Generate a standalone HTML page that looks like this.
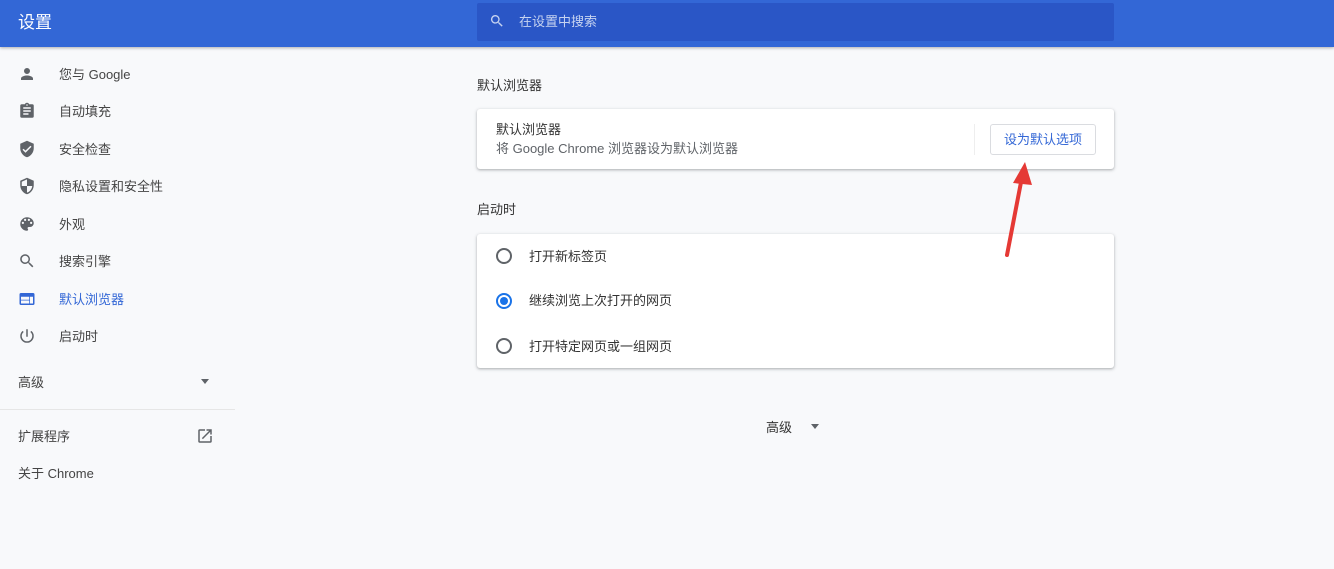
<!DOCTYPE html>
<html><head><meta charset="utf-8"><style>
*{margin:0;padding:0;box-sizing:border-box}
body{width:1334px;height:569px;overflow:hidden;background:#f8f9fb;font-family:"Liberation Sans","Noto Sans CJK SC",sans-serif;font-size:13px;line-height:15px;color:#202124;position:relative}
.hdr{position:absolute;left:0;top:0;width:1334px;height:47px;background:#3367d6;box-shadow:0 1px 3px rgba(0,0,0,.3)}
.hdr .t{position:absolute;left:18px;top:13px;color:#fff;font-size:17px;line-height:20px}
.search{position:absolute;left:477px;top:3px;width:637px;height:38px;background:#2a56c6;border-radius:2px}
.search span{position:absolute;left:42px;top:11px;color:#c6d3f0;font-size:13px}
.item{position:absolute;left:0;height:37px;width:235px;color:#444}
.item svg{position:absolute;left:18px;top:9px}
.item span{position:absolute;left:59px;top:11px}
.sel{color:#3367d6}
.sep{position:absolute;left:0;top:409px;width:235px;border-top:1px solid #e6e6e6}
.sec{position:absolute;left:477px;font-size:13px;color:#333}
.card{position:absolute;left:477px;width:637px;background:#fff;border-radius:3px;box-shadow:0 1px 2px rgba(60,64,67,.3),0 1px 3px 1px rgba(60,64,67,.1)}
.btn{position:absolute;left:513px;top:15px;width:106px;height:31px;border:1px solid #dadce0;border-radius:3px;color:#3367d6;text-align:center;line-height:29px;font-size:13px}
.radio{position:absolute;left:19px;width:16px;height:16px;border:2px solid #5f6368;border-radius:50%}
.radio.on{border-color:#1a73e8}
.radio.on:after{content:"";position:absolute;left:2px;top:2px;width:8px;height:8px;border-radius:50%;background:#1a73e8}
.rl{position:absolute;left:52px;color:#333}
</style></head><body>
<div class="hdr"><div class="t">设置</div>
<div class="search"><svg style="position:absolute;left:12px;top:10px" width="16" height="16" viewBox="0 0 24 24"><path fill="#c6d3f0" d="M15.5 14h-.8l-.3-.3A6.5 6.5 0 1 0 9.5 16a6.5 6.5 0 0 0 4.2-1.6l.3.3v.8l5 5 1.5-1.5-5-5zm-6 0a4.5 4.5 0 1 1 0-9 4.5 4.5 0 0 1 0 9z"/></svg><span>在设置中搜索</span></div></div>

<div class="item" style="top:56px"><svg width="18" height="18" viewBox="0 0 24 24"><path fill="#5f6368" d="M12 12a4 4 0 1 0 0-8 4 4 0 0 0 0 8zm0 2c-2.7 0-8 1.3-8 4v2h16v-2c0-2.7-5.3-4-8-4z"/></svg><span>您与 Google</span></div>
<div class="item" style="top:93px"><svg width="18" height="18" viewBox="0 0 24 24"><path fill="#5f6368" d="M19 3h-4.2A3 3 0 0 0 12 1a3 3 0 0 0-2.8 2H5a2 2 0 0 0-2 2v14a2 2 0 0 0 2 2h14a2 2 0 0 0 2-2V5a2 2 0 0 0-2-2zm-7 0a1 1 0 1 1 0 2 1 1 0 0 1 0-2zm2 14H7v-2h7v2zm3-4H7v-2h10v2zm0-4H7V7h10v2z"/></svg><span>自动填充</span></div>
<div class="item" style="top:131px"><svg width="18" height="18" viewBox="0 0 24 24"><path fill="#5f6368" d="M12 1 3 5v6c0 5.5 3.8 10.7 9 12 5.2-1.3 9-6.5 9-12V5l-9-4zm-2 16-4-4 1.4-1.4 2.6 2.6 6.6-6.6L18 9l-8 8z"/></svg><span>安全检查</span></div>
<div class="item" style="top:168px"><svg width="18" height="18" viewBox="0 0 24 24"><path fill="#5f6368" d="M12 1 3 5v6c0 5.5 3.8 10.7 9 12 5.2-1.3 9-6.5 9-12V5l-9-4zm0 11H5V6.3l7-3.1V12zm0 0h7c-.5 4.1-3.3 7.8-7 8.9V12z"/></svg><span>隐私设置和安全性</span></div>
<div class="item" style="top:206px"><svg width="18" height="18" viewBox="0 0 24 24"><path fill="#5f6368" d="M12 3a9 9 0 0 0 0 18c.8 0 1.5-.7 1.5-1.5 0-.4-.1-.7-.4-1-.2-.3-.4-.6-.4-1 0-.8.7-1.5 1.5-1.5H16a5 5 0 0 0 5-5c0-4.4-4-8-9-8zm-5.5 9a1.5 1.5 0 1 1 0-3 1.5 1.5 0 0 1 0 3zm3-4a1.5 1.5 0 1 1 0-3 1.5 1.5 0 0 1 0 3zm5 0a1.5 1.5 0 1 1 0-3 1.5 1.5 0 0 1 0 3zm3 4a1.5 1.5 0 1 1 0-3 1.5 1.5 0 0 1 0 3z"/></svg><span>外观</span></div>
<div class="item" style="top:243px"><svg width="18" height="18" viewBox="0 0 24 24"><path fill="#5f6368" d="M15.5 14h-.8l-.3-.3A6.5 6.5 0 1 0 9.5 16a6.5 6.5 0 0 0 4.2-1.6l.3.3v.8l5 5 1.5-1.5-5-5zm-6 0a4.5 4.5 0 1 1 0-9 4.5 4.5 0 0 1 0 9z"/></svg><span>搜索引擎</span></div>
<div class="item sel" style="top:281px"><svg width="18" height="18" viewBox="0 0 24 24"><path fill="#3367d6" d="M20 4H4a2 2 0 0 0-2 2v12a2 2 0 0 0 2 2h16a2 2 0 0 0 2-2V6a2 2 0 0 0-2-2zm-5 14H4v-4h11v4zm0-5H4V9h11v4zm5 5h-4V9h4v9z"/></svg><span>默认浏览器</span></div>
<div class="item" style="top:318px"><svg width="18" height="18" viewBox="0 0 24 24"><path fill="#5f6368" d="M13 3h-2v10h2V3zm4.8 2.2-1.4 1.4A7 7 0 1 1 7.6 6.6L6.2 5.2A9 9 0 1 0 17.8 5.2z"/></svg><span>启动时</span></div>
<div style="position:absolute;left:18px;top:375px;color:#444">高级</div>
<div style="position:absolute;left:201px;top:379px;border:4px solid transparent;border-top:5px solid #5f6368"></div>
<div class="sep"></div>
<div style="position:absolute;left:18px;top:429px;color:#444">扩展程序</div>
<svg style="position:absolute;left:196px;top:427px" width="18" height="18" viewBox="0 0 24 24"><path fill="#5f6368" d="M19 19H5V5h7V3H5a2 2 0 0 0-2 2v14a2 2 0 0 0 2 2h14a2 2 0 0 0 2-2v-7h-2v7zM14 3v2h3.6l-9.8 9.8 1.4 1.4L19 6.4V10h2V3h-7z"/></svg>
<div style="position:absolute;left:18px;top:466px;color:#444">关于 Chrome</div>

<div class="sec" style="top:78px">默认浏览器</div>
<div class="card" style="top:109px;height:60px">
<div style="position:absolute;left:19px;top:13px;color:#333">默认浏览器</div>
<div style="position:absolute;left:19px;top:32px;color:#5f6368">将 Google Chrome 浏览器设为默认浏览器</div>
<div style="position:absolute;left:497px;top:15px;height:31px;border-left:1px solid #eee"></div>
<div class="btn">设为默认选项</div>
</div>
<div class="sec" style="top:202px">启动时</div>
<div class="card" style="top:234px;height:134px">
<div class="radio" style="top:14px"></div><div class="rl" style="top:15px">打开新标签页</div>
<div class="radio on" style="top:59px"></div><div class="rl" style="top:59px">继续浏览上次打开的网页</div>
<div class="radio" style="top:104px"></div><div class="rl" style="top:105px">打开特定网页或一组网页</div>
</div>
<svg style="position:absolute;left:995px;top:155px" width="45" height="105"><line x1="12" y1="100" x2="27" y2="22" stroke="#e53935" stroke-width="4" stroke-linecap="round"/><path d="M30 7 L18 28 L37 30 Z" fill="#e53935"/></svg>
<div style="position:absolute;left:766px;top:420px;color:#333">高级</div>
<div style="position:absolute;left:811px;top:424px;border:4px solid transparent;border-top:5px solid #5f6368"></div>
</body></html>
